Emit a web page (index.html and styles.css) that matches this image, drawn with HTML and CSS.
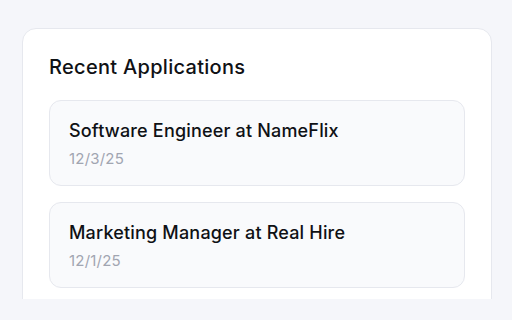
FILE: index.html
```html
<!DOCTYPE html>
<html>
<head>
<meta charset="UTF-8">
<title>Recent Applications</title>
<link rel="stylesheet" href="styles.css">
</head>
<body>

<div class="page">
<div class="card">
<h2 class="card-title">Recent Applications</h2>

<div class="list">
<div class="item">
<div class="job">Software Engineer at NameFlix</div>
<div class="date">12/3/25</div>
</div>

<div class="item">
<div class="job">Marketing Manager at Real Hire</div>
<div class="date">12/1/25</div>
</div>
</div>

</div>
</div>

</body>
</html>
```

FILE: styles.css
```css
body{
    margin:0;
    background:#f5f6fa;
    font-family:Inter, "Noto Sans", sans-serif;
    color:#0f1115;
}

.page{
    height:299px;
    overflow:hidden;
    padding:28px 0 0 22px;
    box-sizing:border-box;
}

.card{
    width:470px;
    box-sizing:border-box;
    background:#ffffff;
    border:1px solid #e6e8ee;
    border-radius:14px;
    padding:24px 26px 24px;
}

.card-title{
    margin:0 0 19px 0;
    font-size:20px;
    line-height:28px;
    font-weight:500;
    letter-spacing:0.3px;
}

.list{
    display:flex;
    flex-direction:column;
    gap:16px;
}

.item{
    background:#f9fafc;
    border:1px solid #e6e8ee;
    border-radius:12px;
    padding:18px 19px 16px;
}

.job{
    font-size:18px;
    line-height:24px;
    font-weight:500;
    letter-spacing:0.18px;
}

.date{
    margin-top:6px;
    font-size:15px;
    line-height:20px;
    color:#a1a5b1;
    letter-spacing:0.2px;
}
```
